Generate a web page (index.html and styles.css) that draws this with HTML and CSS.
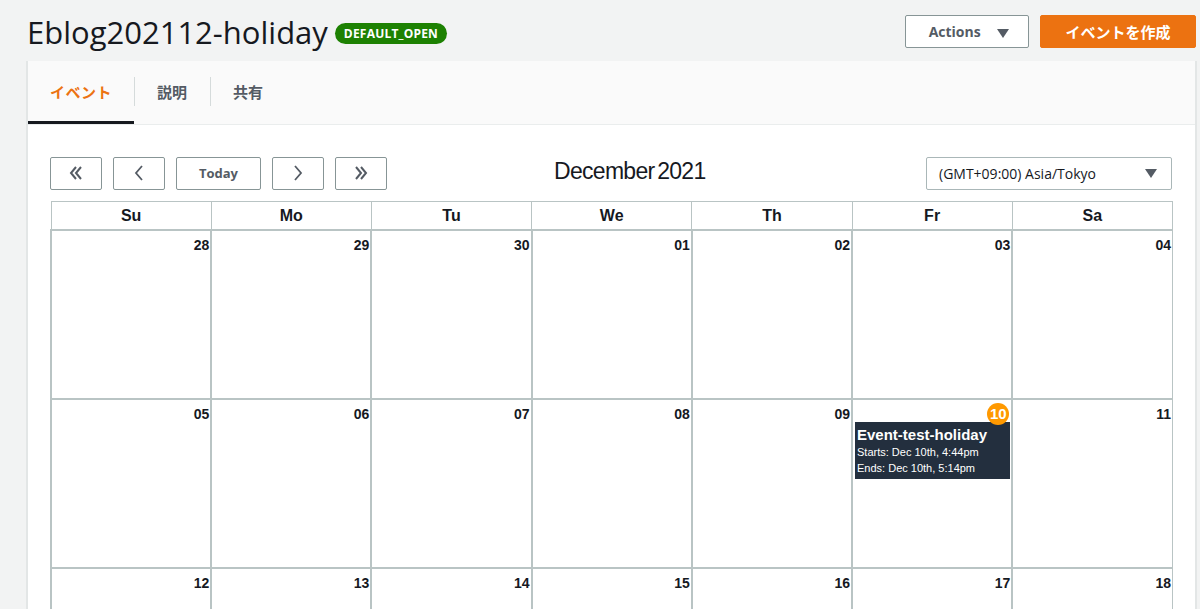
FILE: index.html
```html
<!DOCTYPE html>
<html>
 <head>
  <meta charset="UTF-8">
  <title>Eblog202112-holiday</title>
  <link rel="stylesheet" href="styles.css">
 </head>
 <body>
	<div class="pagehead">
		<h1 class="title">Eblog202112-holiday</h1>
		<span class="badge">DEFAULT_OPEN</span>
		<div class="headbtns">
			<button class="btn_actions">Actions <span class="caret"></span></button>
			<button class="btn_create">イベントを作成</button>
		</div>
	</div>
	<div class="panel">
		<div class="tabs">
			<div class="tab tab_on">イベント</div>
			<div class="tab">説明</div>
			<div class="tab">共有</div>
		</div>
		<div class="content">
			<div class="toolbar">
				<div class="navbtns">
					<button class="nav">
						<svg width="18" height="16" viewBox="0 0 18 16"><path d="M9 2 L4 8 L9 14 M14 2 L9 8 L14 14" fill="none" stroke="#545b64" stroke-width="2"/></svg>
					</button>
					<button class="nav">
						<svg width="12" height="18" viewBox="0 0 12 18"><path d="M9 2 L3 9 L9 16" fill="none" stroke="#545b64" stroke-width="1.8"/></svg>
					</button>
					<button class="nav nav_today">Today</button>
					<button class="nav">
						<svg width="12" height="18" viewBox="0 0 12 18"><path d="M3 2 L9 9 L3 16" fill="none" stroke="#545b64" stroke-width="1.8"/></svg>
					</button>
					<button class="nav">
						<svg width="18" height="16" viewBox="0 0 18 16"><path d="M4 2 L9 8 L4 14 M9 2 L14 8 L9 14" fill="none" stroke="#545b64" stroke-width="2"/></svg>
					</button>
				</div>
				<div class="month">December 2021</div>
				<div class="tzselect">(GMT+09:00) Asia/Tokyo <span class="caret"></span></div>
			</div>
			<table class="cal">
				<tr class="cal_head">
					<th>Su</th><th>Mo</th><th>Tu</th><th>We</th><th>Th</th><th>Fr</th><th>Sa</th>
				</tr>
				<tr>
					<td><div class="day">28</div></td>
					<td><div class="day">29</div></td>
					<td><div class="day">30</div></td>
					<td><div class="day">01</div></td>
					<td><div class="day">02</div></td>
					<td><div class="day">03</div></td>
					<td><div class="day">04</div></td>
				</tr>
				<tr>
					<td><div class="day">05</div></td>
					<td><div class="day">06</div></td>
					<td><div class="day">07</div></td>
					<td><div class="day">08</div></td>
					<td><div class="day">09</div></td>
					<td>
						<div class="day"><span class="today">10</span></div>
						<div class="event">
							<div class="event_title">Event-test-holiday</div>
							<div class="event_line">Starts: Dec 10th, 4:44pm</div>
							<div class="event_line">Ends: Dec 10th, 5:14pm</div>
						</div>
					</td>
					<td><div class="day">11</div></td>
				</tr>
				<tr>
					<td><div class="day">12</div></td>
					<td><div class="day">13</div></td>
					<td><div class="day">14</div></td>
					<td><div class="day">15</div></td>
					<td><div class="day">16</div></td>
					<td><div class="day">17</div></td>
					<td><div class="day">18</div></td>
				</tr>
			</table>
		</div>
	</div>
 </body>
</html>
```

FILE: styles.css
```css
html,body{
	margin: 0px;
	height: 100%;
	overflow: hidden;
	background-color: #f2f3f3;
	font-family: "Open Sans", "Noto Sans CJK JP", sans-serif;
	color: #16191f;
}
button{
	font-family: inherit;
	cursor: pointer;
}
.pagehead{
	display: flex;
	align-items: center;
	height: 61px;
	padding-left: 27px;
	padding-right: 4px;
	box-sizing: border-box;
}
.title{
	margin: 0px;
	font-size: 31px;
	font-weight: normal;
	letter-spacing: 0px;
	line-height: 36px;
	margin-top: 2px;
}
.badge{
	margin-left: 7px;
	margin-top: 5px;
	background-color: #1d8102;
	color: #fff;
	font-size: 12px;
	font-weight: bold;
	line-height: 21px;
	padding: 0px 9px;
	border-radius: 11px;
	letter-spacing: 0.2px;
}
.headbtns{
	margin-left: auto;
	display: flex;
	gap: 11px;
	margin-top: 2px;
}
.btn_actions{
	width: 124px;
	height: 33px;
	background-color: #fff;
	border: solid 1px #879596;
	border-radius: 2px;
	font-size: 14px;
	font-weight: bold;
	color: #545b64;
	padding: 0px;
	padding-left: 4px;
}
.btn_actions .caret{
	margin-left: 13px;
}
.caret{
	display: inline-block;
	width: 0px;
	height: 0px;
	border-left: solid 6px transparent;
	border-right: solid 6px transparent;
	border-top: solid 9px #545b64;
	vertical-align: middle;
}
.btn_create{
	width: 156px;
	height: 33px;
	background-color: #ec7211;
	border: solid 1px #ec7211;
	border-radius: 2px;
	color: #fff;
	font-size: 15px;
	font-weight: bold;
	font-family: "Noto Sans CJK JP", sans-serif;
}
.panel{
	margin-left: 26px;
	width: 1171px;
	height: 560px;
	background-color: #fff;
	border-left: solid 2px #e3e6e6;
	border-right: solid 2px #e3e6e6;
	box-sizing: border-box;
}
.tabs{
	display: flex;
	height: 64px;
	background-color: #fafafa;
	border-bottom: solid 1px #eaeded;
	box-sizing: border-box;
}
.tab{
	position: relative;
	display: flex;
	align-items: center;
	padding: 0px 23px 0px 23px;
	font-family: "Noto Sans CJK JP", sans-serif;
	font-size: 15px;
	font-weight: bold;
	color: #545b64;
	border-bottom: solid 3px transparent;
}
.tab + .tab::before{
	content: "";
	position: absolute;
	left: 0px;
	top: 16px;
	height: 29px;
	border-left: solid 1px #d5dbdb;
}
.tab_on{
	color: #ec7211;
	border-bottom-color: #16191f;
	padding: 0px 22px 0px 22px;
	letter-spacing: 0.5px;
}
.content{
	padding: 32px 23px 0px 22px;
}
.toolbar{
	display: flex;
	align-items: center;
	height: 32px;
}
.navbtns{
	display: flex;
	gap: 11px;
}
.nav{
	width: 52px;
	height: 33px;
	background-color: #fff;
	border: solid 1px #879596;
	border-radius: 2px;
	display: flex;
	align-items: center;
	justify-content: center;
	padding: 0px;
}
.nav_today{
	width: 85px;
	font-size: 13px;
	font-weight: bold;
	color: #545b64;
}
.month{
	margin-left: 167px;
	font-family: "Liberation Sans", Arial, sans-serif;
	font-size: 23px;
	letter-spacing: -0.7px;
	word-spacing: -3px;
	color: #16191f;
	margin-top: -4px;
}
.tzselect{
	margin-left: auto;
	width: 246px;
	height: 33px;
	box-sizing: border-box;
	border: solid 1px #aab7b8;
	border-radius: 2px;
	display: flex;
	align-items: center;
	padding: 0px 14px 0px 12px;
	font-size: 14px;
	justify-content: space-between;
}
.cal{
	margin-top: 12px;
	width: 1123px;
	border-collapse: collapse;
	table-layout: fixed;
	font-family: "Liberation Sans", Arial, sans-serif;
}
.cal th, .cal td{
	border: solid 1px #b9c4c4;
	padding: 0px;
}
.cal_head th{
	height: 27px;
	font-size: 16px;
	font-weight: bold;
	color: #16191f;
}
.cal td{
	height: 167px;
	vertical-align: top;
	border-left-width: 2px;
	border-top-width: 2px;
}
.day{
	text-align: right;
	font-size: 14px;
	font-weight: bold;
	padding: 6px 1px 0px 0px;
	height: 16px;
	color: #16191f;
}
.today{
	display: inline-block;
	width: 22px;
	height: 22px;
	line-height: 22px;
	border-radius: 11px;
	background-color: #ff9900;
	color: #fff;
	text-align: center;
	margin-top: -7px;
	margin-right: 1px;
	font-size: 15px;
}
.event{
	margin: 0px 1px 0px 2px;
	background-color: #232f3e;
	color: #fff;
	height: 57px;
	padding: 4px 2px 0px 2px;
	box-sizing: border-box;
}
.event_title{
	font-size: 15px;
	font-weight: bold;
	line-height: 17px;
	margin-bottom: 1px;
}
.event_line{
	font-size: 11px;
	line-height: 16px;
}
```
